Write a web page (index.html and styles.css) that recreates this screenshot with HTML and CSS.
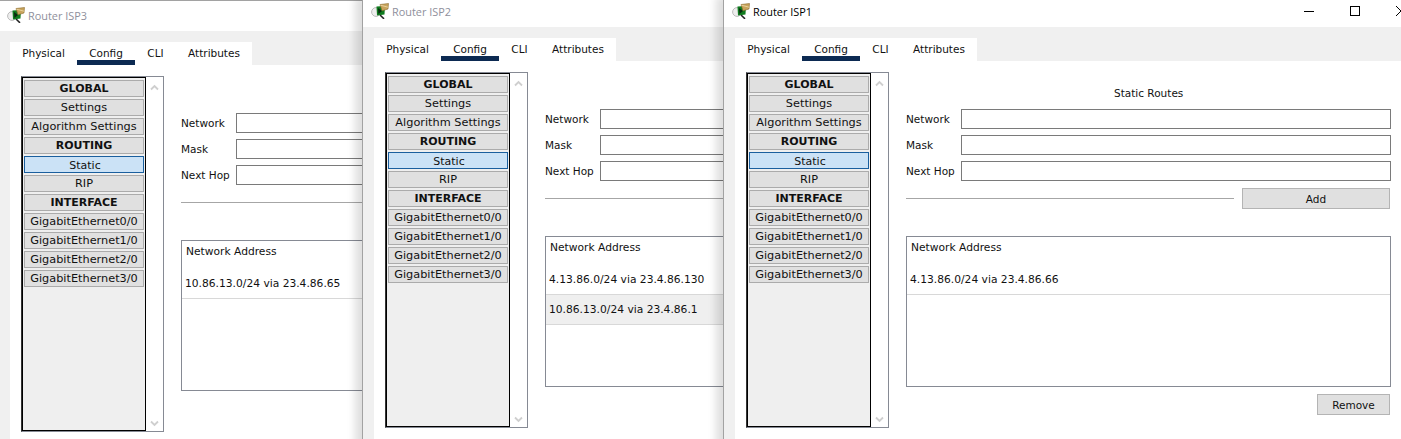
FILE: index.html
```html
<!DOCTYPE html>
<html lang="en">
<head>
<meta charset="utf-8">
<title>Router ISP windows</title>
<link rel="stylesheet" href="styles.css">
</head>
<body>
<svg class="defs" width="0" height="0" aria-hidden="true">
  <symbol id="router-icon" viewBox="0 0 18 16">
    <circle cx="5" cy="9" r="4.4" fill="#eeeeee" stroke="#bcbcbc" stroke-width="1"/>
    <path d="M9 12 L13 15.8" stroke="#222" stroke-width="1.6"/>
    <path d="M5.5 3.5 L14 3 L13.5 11.5 L6 12.5 Z" fill="#0f7a1e"/>
    <path d="M7 5 L11 8 L7.4 11 Z" fill="#0a2a10"/>
    <path d="M9 1.5 L17.5 0.5 L17 6 L11 7.8 Z" fill="#c9a45c" stroke="#8a6a2c" stroke-width=".6"/>
    <path d="M9.5 2.2 L17 4.2" stroke="#f0dca8" stroke-width=".8"/>
  </symbol>
  <symbol id="chev-up" viewBox="0 0 9 7">
    <path d="M1 5.5 L4.5 2 L8 5.5" fill="none" stroke="#cfcfcf" stroke-width="1.8"/>
  </symbol>
  <symbol id="chev-down" viewBox="0 0 9 7">
    <path d="M1 1.5 L4.5 5 L8 1.5" fill="none" stroke="#cfcfcf" stroke-width="1.8"/>
  </symbol>
</svg>
<main class="desktop">

  <section class="window window-isp3">
    <header class="titlebar">
      <svg class="app-icon"><use href="#router-icon"/></svg>
      <span class="title">Router ISP3</span>
    </header>
    <div class="panel">
      <nav class="tabs">
        <span class="tab tab-physical">Physical</span>
        <span class="tab tab-config">Config</span>
        <span class="tab tab-cli">CLI</span>
        <span class="tab tab-attr">Attributes</span>
      </nav>
      <div class="content">
        <aside class="sidebar">
          <ul class="menu">
            <li class="item head">GLOBAL</li>
            <li class="item">Settings</li>
            <li class="item">Algorithm Settings</li>
            <li class="item head">ROUTING</li>
            <li class="item active">Static</li>
            <li class="item">RIP</li>
            <li class="item head">INTERFACE</li>
            <li class="item">GigabitEthernet0/0</li>
            <li class="item">GigabitEthernet1/0</li>
            <li class="item">GigabitEthernet2/0</li>
            <li class="item">GigabitEthernet3/0</li>
          </ul>
          <div class="scroll">
            <svg class="chev"><use href="#chev-up"/></svg>
            <svg class="chev"><use href="#chev-down"/></svg>
          </div>
        </aside>
        <div class="main">
          <div class="heading"></div>
          <div class="fields">
            <label class="lbl">Network</label><span class="input"></span>
            <label class="lbl">Mask</label><span class="input"></span>
            <label class="lbl">Next Hop</label><span class="input"></span>
          </div>
          <div class="add-row"><span class="rule"></span></div>
          <div class="list">
            <div class="list-head">Network Address</div>
            <div class="row row-first">10.86.13.0/24 via 23.4.86.65</div>
          </div>
        </div>
      </div>
    </div>
  </section>

  <section class="window window-isp2">
    <header class="titlebar">
      <svg class="app-icon"><use href="#router-icon"/></svg>
      <span class="title">Router ISP2</span>
    </header>
    <div class="panel">
      <nav class="tabs">
        <span class="tab tab-physical">Physical</span>
        <span class="tab tab-config">Config</span>
        <span class="tab tab-cli">CLI</span>
        <span class="tab tab-attr">Attributes</span>
      </nav>
      <div class="content">
        <aside class="sidebar">
          <ul class="menu">
            <li class="item head">GLOBAL</li>
            <li class="item">Settings</li>
            <li class="item">Algorithm Settings</li>
            <li class="item head">ROUTING</li>
            <li class="item active">Static</li>
            <li class="item">RIP</li>
            <li class="item head">INTERFACE</li>
            <li class="item">GigabitEthernet0/0</li>
            <li class="item">GigabitEthernet1/0</li>
            <li class="item">GigabitEthernet2/0</li>
            <li class="item">GigabitEthernet3/0</li>
          </ul>
          <div class="scroll">
            <svg class="chev"><use href="#chev-up"/></svg>
            <svg class="chev"><use href="#chev-down"/></svg>
          </div>
        </aside>
        <div class="main">
          <div class="heading"></div>
          <div class="fields">
            <label class="lbl">Network</label><span class="input"></span>
            <label class="lbl">Mask</label><span class="input"></span>
            <label class="lbl">Next Hop</label><span class="input"></span>
          </div>
          <div class="add-row"><span class="rule"></span></div>
          <div class="list">
            <div class="list-head">Network Address</div>
            <div class="row row-first">4.13.86.0/24 via 23.4.86.130</div>
            <div class="row row-alt">10.86.13.0/24 via 23.4.86.1</div>
          </div>
        </div>
      </div>
    </div>
  </section>

  <section class="window window-isp1">
    <header class="titlebar">
      <svg class="app-icon"><use href="#router-icon"/></svg>
      <span class="title title-active">Router ISP1</span>
      <div class="controls">
        <svg class="ctl" viewBox="0 0 46 20"><path d="M18 10.5 H28" stroke="#000" stroke-width="1"/></svg>
        <svg class="ctl" viewBox="0 0 46 20"><rect x="18.5" y="5.5" width="9" height="9" fill="none" stroke="#000"/></svg>
        <svg class="ctl" viewBox="0 0 46 20"><path d="M18 5 L28 15 M28 5 L18 15" stroke="#000" stroke-width="1" fill="none"/></svg>
      </div>
    </header>
    <div class="panel">
      <nav class="tabs">
        <span class="tab tab-physical">Physical</span>
        <span class="tab tab-config">Config</span>
        <span class="tab tab-cli">CLI</span>
        <span class="tab tab-attr">Attributes</span>
      </nav>
      <div class="content">
        <aside class="sidebar">
          <ul class="menu">
            <li class="item head">GLOBAL</li>
            <li class="item">Settings</li>
            <li class="item">Algorithm Settings</li>
            <li class="item head">ROUTING</li>
            <li class="item active">Static</li>
            <li class="item">RIP</li>
            <li class="item head">INTERFACE</li>
            <li class="item">GigabitEthernet0/0</li>
            <li class="item">GigabitEthernet1/0</li>
            <li class="item">GigabitEthernet2/0</li>
            <li class="item">GigabitEthernet3/0</li>
          </ul>
          <div class="scroll">
            <svg class="chev"><use href="#chev-up"/></svg>
            <svg class="chev"><use href="#chev-down"/></svg>
          </div>
        </aside>
        <div class="main">
          <h2 class="heading">Static Routes</h2>
          <div class="fields">
            <label class="lbl">Network</label><span class="input"></span>
            <label class="lbl">Mask</label><span class="input"></span>
            <label class="lbl">Next Hop</label><span class="input"></span>
          </div>
          <div class="add-row"><span class="rule"></span><span class="btn btn-add">Add</span></div>
          <div class="list">
            <div class="list-head">Network Address</div>
            <div class="row row-first">4.13.86.0/24 via 23.4.86.66</div>
          </div>
          <div class="remove-row"><span class="btn btn-remove">Remove</span></div>
        </div>
      </div>
    </div>
  </section>

</main>
</body>
</html>
```
FILE: styles.css
```css
* { box-sizing: border-box; }
html, body { margin: 0; padding: 0; background: #fff; }
.defs { position: absolute; }
.desktop {
  position: relative;
  width: 1401px;
  height: 439px;
  overflow: hidden;
  font-family: "DejaVu Sans", sans-serif;
  font-size: 10.5px;
  color: #111;
}
.window {
  position: absolute;
  width: 701px;
  height: 460px;
  background: #f0f0f0;
  border-left: 1px solid #a2a2a2;
  border-top: 1px solid #a2a2a2;
  box-shadow: -7px 0 8px rgba(0, 0, 0, .13);
}
.window-isp3 { left: -2px; top: 0; }
.window-isp2 { left: 362px; top: -4px; }
.window-isp1 { left: 723px; top: -4px; }

.titlebar {
  display: flex;
  align-items: center;
  height: 30px;
  background: #fff;
  padding: 0 0 2px 8px;
}
.app-icon { width: 18px; height: 16px; flex: none; }
.title {
  margin-left: 3px;
  font-family: "Open Sans", sans-serif;
  font-size: 10.9px;
  color: #8f909c;
}
.title-active { color: #000; }
.controls {
  display: flex;
  margin-left: auto;
}
.ctl { width: 46px; height: 20px; display: block; }

.panel {
  margin: 11px 0 0 11px;
  height: 420px;
  background: #fff;
}
.tabs {
  display: flex;
  height: 23px;
  background: #f0f0f0;
}
.tab {
  display: flex;
  justify-content: center;
  padding-top: 5px;
  background: #fff;
  color: #111;
}
.tab-physical { width: 67px; }
.tab-config { width: 58px; border-bottom: 5px solid #0c2a52; }
.tab-cli { width: 41px; }
.tab-attr { width: 76px; }

.content {
  display: flex;
  padding: 11px 0 0 11px;
  align-items: flex-start;
}
.sidebar {
  display: flex;
  width: 143px;
  height: 356px;
  border: 1px solid #868a94;
  border-left-color: #333;
  flex: none;
}
.menu {
  list-style: none;
  margin: 0;
  padding: 2px 1px 1px;
  width: 124px;
  height: 100%;
  border: 1px solid #000;
  background: #efefef;
  display: flex;
  flex-direction: column;
  gap: 2px;
}
.item {
  height: 17px;
  flex: none;
  display: flex;
  align-items: center;
  justify-content: center;
  font-size: 11.3px;
  background: #e0e0e0;
  border: 1px solid #ababab;
  white-space: nowrap;
}
.head { font-weight: bold; font-size: 11px; }
.active {
  padding: 1px 0 0 2px;
  font-size: 11px;
  background: #cbe2f6;
  border-color: #1a5f9e;
}
.scroll {
  flex: 1;
  background: #fff;
  display: flex;
  flex-direction: column;
  justify-content: space-between;
  align-items: center;
  padding: 7px 0 4px;
}
.chev { width: 9px; height: 7px; }

.main {
  margin-left: 17px;
  width: 485px;
  flex: none;
}
.heading {
  margin: 0;
  height: 37px;
  padding-top: 15px;
  padding-left: 208px;
  font-size: inherit;
  font-weight: normal;
  white-space: nowrap;
}
.fields {
  display: grid;
  grid-template-columns: 55px 1fr;
  row-gap: 6px;
  align-items: center;
}
.input {
  height: 20px;
  background: #fff;
  border: 1px solid #7a7a7a;
}
.add-row {
  display: flex;
  align-items: center;
  gap: 8px;
  height: 21px;
  margin-top: 7px;
  padding-right: 1px;
}
.rule { flex: 1; height: 1px; background: #a6a6a6; }
.btn {
  display: flex;
  align-items: center;
  justify-content: center;
  background: #e0e0e0;
  border: 1px solid #b4b4b4;
}
.btn-add { width: 148px; height: 21px; }
.list {
  margin-top: 27px;
  height: 151px;
  font-size: 10.7px;
  border: 1px solid #868a94;
  background: #fff;
}
.list-head { height: 25px; padding: 4px 0 0 4px; }
.row {
  padding-left: 3px;
  display: flex;
  align-items: center;
  border-bottom: 1px solid #d8d8d8;
  white-space: nowrap;
}
.row-first { height: 33px; padding-top: 2px; }
.row-alt { height: 30px; background: #efefef; }
.remove-row {
  display: flex;
  justify-content: flex-end;
  margin-top: 7px;
  padding-right: 1px;
}
.btn-remove { width: 73px; height: 21px; }
```
